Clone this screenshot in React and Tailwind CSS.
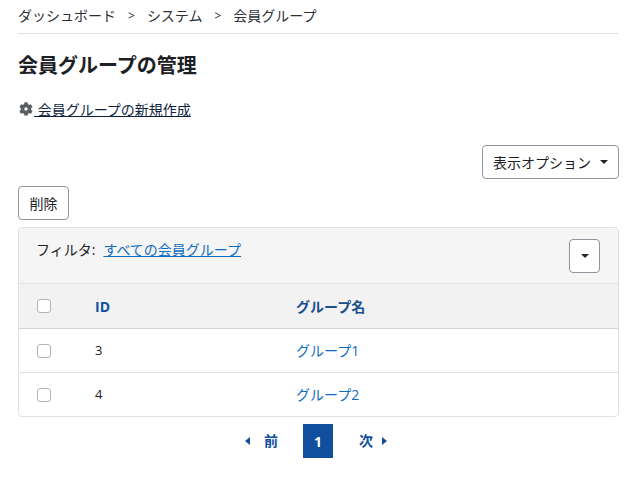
import React from 'react'

const font = { fontFamily: '"Open Sans", "Noto Sans CJK JP", sans-serif' }

const Caret = ({ className = '' }) => (
  <span className={`inline-block w-0 h-0 border-x-[4px] border-x-transparent border-t-[4px] border-t-[#212529] ${className}`}></span>
)

const Row = ({ id, name, borderClass }) => (
  <div className={`flex h-[44px] items-center border-t ${borderClass}`}>
    <div className="w-[76px] pl-[18px] flex items-center">
      <span className="w-[14px] h-[14px] rounded-[3px] border border-[#adb5bd] bg-white"></span>
    </div>
    <div className="w-[201px] text-[13px] text-[#1d2125]">{id}</div>
    <a className="text-[14px] text-[#0f6cbf]">{name}</a>
  </div>
)

export default function App() {
  return (
    <div className="w-[642px] h-[484px] bg-white px-[18px] text-[#1d2125] overflow-hidden" style={font}>
      <div className="w-[601px]">
        <nav className="flex items-center h-[34px] pb-[2px] border-b border-[#dee2e6] text-[14px] leading-[30px] text-[#2b3035]">
          <a>ダッシュボード</a>
          <span className="mx-[12px] text-[12px]">&gt;</span>
          <a>システム</a>
          <span className="mx-[12px] text-[12px]">&gt;</span>
          <span>会員グループ</span>
        </nav>

        <h2 className="mt-[17px] text-[20px] leading-[30px] font-bold text-[#1d2125]">会員グループの管理</h2>

        <div className="mt-[18px] flex items-center h-[20px] text-[14px]">
          <svg viewBox="0 0 512 512" className="w-[14px] h-[14px] mx-[1px] fill-[#5a5e62]">
            <path fillRule="evenodd" d="M487.4 315.7l-42.6-24.6c4.3-23.2 4.3-47 0-70.2l42.6-24.6c4.9-2.8 7.1-8.6 5.5-14-11.1-35.6-30-67.8-54.7-94.6-3.8-4.1-10-5.1-14.8-2.3L380.8 110c-17.9-15.4-38.5-27.3-60.8-35.1V25.8c0-5.6-3.9-10.5-9.4-11.7-36.7-8.2-74.3-7.8-109.2 0-5.5 1.2-9.4 6.1-9.4 11.7V75c-22.2 7.9-42.8 19.8-60.8 35.1L88.7 85.5c-4.9-2.8-11-1.9-14.8 2.3-24.7 26.7-43.6 58.9-54.7 94.6-1.7 5.4.6 11.2 5.5 14L67.3 221c-4.3 23.2-4.3 47 0 70.2l-42.6 24.6c-4.9 2.8-7.1 8.6-5.5 14 11.1 35.6 30 67.8 54.7 94.6 3.8 4.1 10 5.1 14.8 2.3l42.6-24.6c17.9 15.4 38.5 27.3 60.8 35.1v49.2c0 5.6 3.9 10.5 9.4 11.7 36.7 8.2 74.3 7.8 109.2 0 5.5-1.2 9.4-6.1 9.4-11.7v-49.2c22.2-7.9 42.8-19.8 60.8-35.1l42.6 24.6c4.9 2.8 11 1.9 14.8-2.3 24.7-26.7 43.6-58.9 54.7-94.6 1.5-5.5-.7-11.3-5.6-14.1zM256 316c-33 0-60-27-60-60s27-60 60-60 60 27 60 60-27 60-60 60z" />
          </svg>
          <a className="underline text-[#0f1f3d] whitespace-pre"> 会員グループの新規作成</a>
        </div>

        <div className="mt-[26px] flex justify-end">
          <button className="h-[34px] w-[137px] rounded-[4px] border border-[#8f959e] bg-white text-[14px] flex items-center justify-center gap-[9px]">
            表示オプション
            <Caret />
          </button>
        </div>

        <button className="mt-[7px] block h-[34px] w-[51px] rounded-[4px] border border-[#8f959e] bg-white text-[14px]">削除</button>

        <div className="mt-[7px] rounded-[4px] border border-[#dee2e6] overflow-hidden">
          <div className="h-[56px] bg-[#f5f5f5] flex justify-between pl-[17px] pr-[18px] pt-[11px] border-b border-[#dee2e6]">
            <div className="text-[14px] leading-[22px]">
              <span>フィルタ:</span>
              <a className="ml-[8px] underline text-[#0f6cbf]">すべての会員グループ</a>
            </div>
            <button className="h-[34px] w-[31px] rounded-[4px] border border-[#8f959e] bg-white flex items-center justify-center">
              <Caret />
            </button>
          </div>
          <div className="flex h-[44px] items-center bg-[#f2f2f2] text-[14px] font-bold text-[#0f4f9e]">
            <div className="w-[76px] pl-[18px] flex items-center">
              <span className="w-[14px] h-[14px] rounded-[3px] border border-[#adb5bd] bg-white"></span>
            </div>
            <div className="w-[201px]">ID</div>
            <div className="text-[#1b4f8c]">グループ名</div>
          </div>
          <Row id="3" name="グループ1" borderClass="border-[#ced4da]" />
          <Row id="4" name="グループ2" borderClass="border-[#dee2e6]" />
        </div>

        <div className="mt-[7px] flex items-center pl-[227px] h-[34px] text-[14px] font-bold text-[#0f4f9e]">
          <span className="flex items-center w-[58px] gap-[14px] pb-[1px]">
            <span className="w-0 h-0 border-y-[4px] border-y-transparent border-r-[5px] border-r-[#0f4f9e]"></span>
            前
          </span>
          <span className="w-[30px] h-[34px] bg-[#0f4f9e] text-white flex items-center justify-center">1</span>
          <span className="flex items-center pl-[26px] gap-[9px] pb-[1px]">
            次
            <span className="w-0 h-0 border-y-[4px] border-y-transparent border-l-[5px] border-l-[#0f4f9e]"></span>
          </span>
        </div>
      </div>
    </div>
  )
}
